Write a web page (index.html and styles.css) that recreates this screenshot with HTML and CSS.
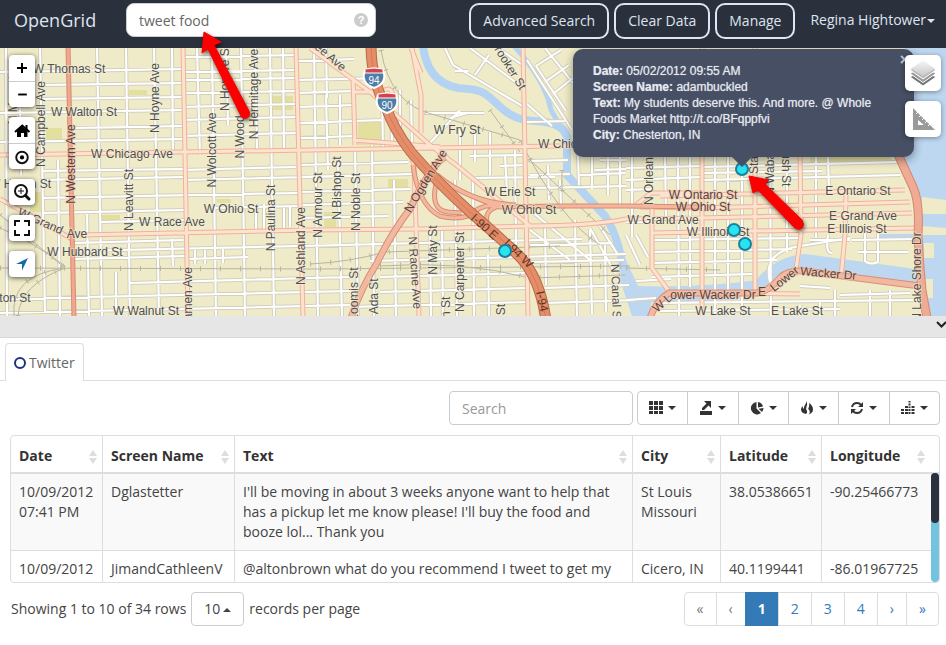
FILE: index.html
```html
<!DOCTYPE html>
<html lang="en">
<head>
<meta charset="utf-8">
<title>OpenGrid</title>
<link rel="stylesheet" href="styles.css">
</head>
<body>
<header class="topbar">
  <a class="brand" href="#">OpenGrid</a>
  <div class="query">
    <input class="query-input" type="text" value="tweet food" aria-label="Quick search">
    <button class="query-help" type="button" aria-label="Help">?</button>
  </div>
  <nav class="actions">
    <button class="outline" type="button">Advanced Search</button>
    <button class="outline" type="button">Clear Data</button>
    <button class="outline" type="button">Manage</button>
    <a class="user" href="#">Regina Hightower<span class="caret"></span></a>
  </nav>
</header>

<section class="map" aria-label="Map">
  <svg class="map-canvas" viewBox="0 48 946 268" preserveAspectRatio="xMinYMin slice">
    <defs>
      <path id="minor" d="M0 72l183-3M42 85l141-2M42 99l141-2M0 113l183-3M75 128l108-2M0 142l183-3M42 171l141-2M42 180l141-3M42 198l256-5M42 213l143-3M100 222l85-2M75 243l108-3M75 251l224-5M75 259l110-3M0 299l350-8M0 313l350-8M130 283l220-6
        M183 57l113-2M183 72l113-2M183 80l113-2M183 93l113-2M183 107l113-3M183 120l113-3M183 136l113-3M183 170l113-3M183 180l170-4M214 208l86-2M188 259l60-2M298 61l56-2M298 80l85-2M298 93l55-2M298 107l56-2M298 123l85-3M298 138l58-2M298 165l110-3M298 177l115-3M298 192l112-3M298 205l105-3M298 218l90-2M302 246l280-7M370 261l256-7M380 277l146-4M380 292l146-4M350 307l180-5M545 288l84-3M545 303l90-3
        M40 48l5 265M97 48l5 268M126 48l4 268M154 48l5 268M197 48l3 107M212 48l4 268M226 48l2 77M241 48l4 268M255 48l2 102M270 48l4 268M283 48l1 100M6 48l1 268M20 95l1 80M58 160l2 156M87 212l2 104M116 272l0 44M172 48l1 105M172 239l1 27M195 250l0 14M205 250l0 14M223 247l0 16M256 206l0 24M264 204l0 28M284 208l0 24M290 207l0 20
        M314 48l4 268M326 95l2 75M338 160l4 156M326 48l1 50M340 95l0 50M355 150l3 166M372 145l2 171M382 90l1 60M394 180l2 136M391 90l1 55M411 100l1 45M400 90l0 50M430 225l1 91M442 228l1 88M455 180l2 136M473 180l1 136M488 255l1 61M460 130l0 50M475 130l0 32M490 132l0 43M505 155l2 38M515 150l1 95M545 225l1 60M560 180l1 25M575 220l2 96M548 165l1 35M590 230l2 84M605 245l1 67M539 275l2 41
        M470 156l54-1M500 166l24-1M475 178l80-1M530 161l38-1M530 175l40-1M530 188l55-1M530 245l82-2M530 262l94-2
        M445 48l8 17M453 65l71 42M470 48l52 39M498 48l26 18M455 71l13 0M475 75l14-20
        M536 66l25-16M536 66l30 45M545 82l24-17M553 94l20-16M545 48l28 35M527 60l45 70M527 104l25 22M527 122l38-1
        M424 113l60 0M450 118l17-5M430 143l30-33
        M530 210l60 50M530 230l40 30M590 228l25 45M598 223l20 32M580 175l45-2M585 187l41-1M600 160l26 0M595 170l31-1M578 155l1 30M592 157l0 32M608 155l0 40M620 155l0 50
        M626 168l75-2M626 180l75-3M626 190l26-1M632 157l0 80M665 157l1 60M678 157l1 160M690 157l0 130M715 157l0 160M728 157l0 135M742 175l0 145M770 157l1 160M787 157l0 95M816 157l0 80M828 157l1 35M702 167l195-5M702 180l198-5M702 173l120-2M652 252l140-3M652 263l125-3M652 240l150-2M626 222l26 0M626 235l14 30M636 235l12 22M652 277l100-3M636 281l35-2M660 303l257-3M660 311l180-2M800 305l0 11M820 300l0 16M870 290l0 26M890 290l0 26M835 290l0 26M810 240l40 0M852 240l65-1M858 252l50 0M828 235q-3 18 4 18M865 232l0 30M878 230l0 32M866 262q6 3 12 0M770 282q-8-30 30-36l50-8M770 282l10 4M800 286l30 2M840 295l70-2M626 300l30-2"/>
      <path id="avenue" d="M0 155L310 150L626 145L650 144M80 235L310 230L420 229L530 226Q590 226 626 219L700 218L912 213M183 48l5 268M296 48l7 268M353 77l2 68M408 148L414 165L419 316M421 133V95L412 48M411 48l10 25M310 48L370 92L430 145L460 168L530 226M523 48l5 268M0 199L42 222L72 239M353 140L440 147M385 90Q395 85 393 108M353 92L375 92M702 48V316M755 48V292M800 150L801 235L795 276M846 195L845 235L841 278M652 205L652 268L668 290M702 193H651L636 205M660 196L905 190M700 208L910 202M652 233L915 228M702 293L800 294M640 207L702 208"/>
      <path id="ramp" d="M413 165Q418 205 440 216Q455 220 468 216M436 184Q430 210 448 212L462 213M440 180Q470 197 500 207L560 206L626 206L702 207M470 216Q480 203 500 206M488 226Q482 210 500 206M437 175Q470 203 516 205"/>
      <path id="ogden" d="M445 157Q430 166 410 209Q392 232 377 263Q360 290 351 318"/>
      <path id="wacker" d="M650 318Q655 302 669 293L756 293Q768 292 781 277Q788 270 805 271L850 277L920 286"/>
      <path id="shore" d="M896 150L913 187Q920 202 918 235L920 268L922 290L927 318"/>
      <path id="kennedy" d="M371 44Q371 80 386 107Q393 128 411 152Q435 180 469 211Q505 242 521 258Q540 279 546 320"/>
      <path id="rail" d="M0 268L320 269L630 266M0 228Q30 240 65 266M0 215Q25 235 65 268M65 268Q10 275 14 316M18 316Q20 285 65 268M310 264Q350 262 385 252L560 246M380 266Q460 260 530 278L625 275M381 50Q390 105 435 115L520 140Q560 220 600 245M530 160L610 235M562 170L562 192M626 268L720 270M490 110L520 152"/>
      <linearGradient id="sheet" x1="0" y1="0" x2="0" y2="1"><stop offset="0" stop-color="#f6f6f6"/><stop offset="1" stop-color="#c9c9c9"/></linearGradient>
    </defs>

    <rect class="land" x="0" y="48" width="2000" height="900"/>
    <g class="park">
      <path d="M271 96h22v14h-22zM46 128h16v11h-16zM129 90h18v5h-18zM102 215h18v5h-18zM358 121h23v24h-23zM388 179h20v11h-20zM324 212h12v15h-12zM217 199h14v4h-14zM30 192h12v20h-12zM810 157h80l4 6h-84z"/>
    </g>
    <g class="water">
      <path d="M905 48H2000V600H927L921 240H880V234H918L921 200L903 155Z"/>
      <path class="channel" d="M423 46Q428 88 468 89C498 90 495 119 535 121Q567 122 568 142"/>
      <path class="channel narrow" d="M514 46Q545 80 551 110Q560 125 567 140"/>
      <path class="channel" d="M567 137V175Q590 200 605 216Q618 235 623 268Q630 290 644 303"/>
      <path class="river" d="M634 294Q700 296 760 288Q778 264 805 262L922 278"/>
      <path d="M624 256L640 290L652 292L650 316H632L620 280Z"/>
    </g>
    <path class="land" d="M922 197L946 200V214H922zM922 226L946 228V235H922zM924 243H934V258H924zM925 279H933V298H927z"/>

    <use href="#minor" class="minor-case"/><use href="#minor" class="minor-fill"/>
    <use href="#rail" class="rail"/><use href="#rail" class="rail-ties"/>
    <use href="#avenue" class="avenue-case"/><use href="#avenue" class="avenue-fill"/>
    <path class="western-case" d="M68 46L74 318"/><path class="western" d="M68 46L74 318"/>
    <use href="#ramp" class="ramp-case"/><use href="#ramp" class="ramp-fill"/>
    <use href="#ogden" class="ogden-case"/><use href="#ogden" class="ogden-fill"/>
    <use href="#wacker" class="ogden-case"/><use href="#wacker" class="ogden-fill"/>
    <use href="#shore" class="shore-case"/><use href="#shore" class="shore-fill"/>
    <use href="#kennedy" class="kennedy-case"/><use href="#kennedy" class="kennedy-fill"/><use href="#kennedy" class="kennedy-mid"/>

    <g class="shield">
      <path d="M365 70Q374 67 383 70Q388 83 374 88Q360 83 365 70Z"/><path class="shield-top" d="M365 69Q374 67 383 69V73H365Z"/><text x="374" y="84">94</text>
      <path d="M378 95Q387 92 396 95Q401 108 387 113Q373 108 378 95Z"/><path class="shield-top" d="M378 94Q387 92 396 94V98H378Z"/><text x="387" y="109">90</text>
    </g>

    <g class="streets">
      <text x="69" y="73">W Thomas St</text><text x="84" y="116">W Walton St</text><text x="132" y="158">W Chicago Ave</text>
      <text x="231" y="213">W Ohio St</text><text x="172" y="226">W Race Ave</text><text x="85" y="256">W Hubbard St</text><text x="15" y="302">ton St</text><text x="146" y="315">W Walnut St</text>
      <text x="20" y="188">W Huron St</text><text transform="translate(17 215) rotate(24)" class="start">W Grand</text><text x="77" y="238">Ave</text>
      <text x="457" y="134">W Fry St</text><text x="538" y="148" class="start">W Chic</text><text x="510" y="196">W Erie St</text><text x="529" y="214">W Ohio St</text>
      <text class="major" x="703" y="199">W Ontario St</text><text class="major" x="703" y="211">W Ohio St</text><text x="663" y="224">W Grand Ave</text><text x="718" y="236">W Illinois St</text>
      <text x="858" y="195">E Ontario St</text><text x="863" y="220">E Grand Ave</text><text x="857" y="233">E Illinois St</text>
      <text x="723" y="315">W Lake St</text><text x="797" y="315">E Lake St</text>
      <text transform="translate(657 313) rotate(-42)" class="start major">W L</text><text class="major" x="713" y="299">ower Wacker Dr</text><text class="major" x="762" y="296">E</text>
      <text transform="translate(774 292) rotate(-38)" class="start major">Lower</text><text transform="translate(800 275) rotate(5)" class="start major">Wacker Dr</text>
      <text transform="translate(17 100) rotate(-90)">N Mozart</text>
      <text transform="translate(45 124) rotate(-90)">N Campbell Ave</text><text class="major" transform="translate(75 164) rotate(-90)">N Western Ave</text>
      <text transform="translate(159 98) rotate(-90)">N Hoyne Ave</text><text transform="translate(216 150) rotate(-90)">N Wolcott Ave</text>
      <text transform="translate(244 137) rotate(-90)">N Wood</text><text transform="translate(229 78) rotate(-90)">N Honore St</text><text transform="translate(258 94) rotate(-90)">N Hermitage Ave</text>
      <text transform="translate(133 200) rotate(-90)">N Leavitt St</text><text transform="translate(192 298) rotate(-90)">Damen Ave</text>
      <text transform="translate(275 218) rotate(-90)">N Paulina St</text><text transform="translate(305 246) rotate(-90)">N Ashland Ave</text>
      <text transform="translate(322 205) rotate(-90)">N Armour St</text><text transform="translate(341 188) rotate(-90)">N Bishop St</text><text transform="translate(360 202) rotate(-90)">N Noble St</text>
      <text transform="translate(358 294) rotate(-90)">Loomis St</text><text transform="translate(378 302) rotate(-90)">N Ada St</text>
      <text transform="translate(437 250) rotate(-90)">N May St</text><text transform="translate(464 272) rotate(-90)">N Carpenter St</text>
      <text transform="translate(411 273) rotate(86)">N Racine Ave</text><text transform="translate(450 314) rotate(-90)">gan St</text><text transform="translate(505 318) rotate(-90)">en St</text>
      <text transform="translate(612 293) rotate(88)">N Canal St</text><text transform="translate(653 178) rotate(-90)">N Orleans</text>
      <text transform="translate(758 160) rotate(-90)">State</text><text transform="translate(774 168) rotate(-90)">N Wabash</text><text transform="translate(782 165) rotate(90)">Rush St</text>
      <text transform="translate(921 277) rotate(-90)">N Lake Shore Dr</text>
      <text class="major" transform="translate(429 183) rotate(-59)">N Ogden Ave</text><text transform="translate(328 60) rotate(40)">ee Ave</text><text transform="translate(507 70) rotate(58)">rooker St</text>
      <text transform="translate(470 219) rotate(42)" class="start road">I-90 E</text><text transform="translate(503 244) rotate(44)" class="start road">I-94 W</text><text transform="translate(536 292) rotate(78)" class="start road">I-94</text>
    </g>
    <g class="marker"><circle cx="742" cy="169" r="6"/><circle cx="734" cy="230" r="6"/><circle cx="745" cy="244" r="6"/><circle cx="505" cy="251" r="6"/></g>
  </svg>

  <div class="tools tools-left">
    <div class="tool-group">
      <button type="button" aria-label="Zoom in"><svg viewBox="0 0 26 26"><path class="thick" d="M8 13h10M13 8v10"/></svg></button>
      <button type="button" aria-label="Zoom out"><svg viewBox="0 0 26 26"><path class="thick" d="M9 13h9"/></svg></button>
    </div>
    <div class="tool-group">
      <button type="button" aria-label="Home"><svg viewBox="0 0 26 26"><path d="M13 9.500L18.500 14V20H15V16H12V20H8V14Z"/><path class="roof" d="M6 15L13.300 8.500L20.500 15"/><path d="M16.500 8h2v4h-2z"/></svg></button>
      <button type="button" aria-label="Center"><svg viewBox="0 0 26 26"><circle class="line" cx="13" cy="14" r="6"/><circle cx="13" cy="14" r="2.200"/></svg></button>
    </div>
    <div class="tool-group"><button type="button" aria-label="Zoom to area"><svg viewBox="0 0 26 26"><circle class="line" cx="12" cy="12" r="6"/><path class="fine" d="M9 12h6M12 9v6"/><path class="handle" d="M16.500 16.500L20 20"/></svg></button></div>
    <div class="tool-group"><button type="button" aria-label="Full screen"><svg viewBox="0 0 26 26"><path class="line" d="M6 11V6H11M15 6H20V11M20 15V20H15M11 20H6V15"/></svg></button></div>
    <div class="tool-group"><button type="button" aria-label="Locate me"><svg viewBox="0 0 26 26"><path class="locate" d="M19 7L7 13H13V19.500Z"/></svg></button></div>
  </div>

  <article class="popup">
    <button class="popup-close" type="button" aria-label="Close">×</button>
    <p><b>Date:</b> 05/02/2012 09:55 AM</p>
    <p><b>Screen Name:</b> adambuckled</p>
    <p><b>Text:</b> My students deserve this. And more. @ Whole Foods Market http://t.co/BFqppfvi</p>
    <p><b>City:</b> Chesterton, IN</p>
  </article>

  <div class="tools tools-right">
    <button type="button" aria-label="Layers"><svg viewBox="0 0 36 36"><g stroke="#fff" stroke-width="1"><path fill="#777" d="M5 22L18 31L31 22L18 15Z"/><path fill="#999" d="M5 18.500L18 27.500L31 18.500L18 11Z"/><path fill="#bbb" d="M5 15L18 24L31 15L18 6Z"/></g><path fill="url(#sheet)" d="M6 13.500L18 21L30 13.500L18 5.500Z"/></svg></button>
    <button type="button" aria-label="Measure"><svg viewBox="0 0 36 36"><path fill="#9a9a9a" fill-rule="evenodd" d="M8 7L30 29H8ZM13 19V24H19Z"/><path stroke="#fff" stroke-width="1" d="M11 13l2-2M14 16l2-2M17 19l2-2M20 22l2-2M23 25l2-2"/></svg></button>
  </div>
</section>

<div class="splitter">
  <button type="button" aria-label="Collapse results"><svg viewBox="0 0 12 10"><path d="M3 2L7.500 6.500L12 2"/></svg></button>
</div>

<main class="results">
  <nav class="tabs"><a class="tab" href="#"><span class="ring"></span>Twitter</a></nav>
  <div class="toolbar">
    <input class="search" type="text" placeholder="Search" aria-label="Search">
    <div class="button-group">
      <button type="button" aria-label="Columns"><svg viewBox="0 0 14 14"><path d="M0 0h4v4H0zM5 0h4v4H5zM10 0h4v4h-4zM0 5h4v4H0zM5 5h4v4H5zM10 5h4v4h-4zM0 10h4v3H0zM5 10h4v3H5zM10 10h4v3h-4z"/></svg><span class="caret"></span></button>
      <button type="button" aria-label="Export"><svg viewBox="0 0 14 14"><path d="M1 10h12v4H1zM5 0h7v7L9.500 4.500L5 9H3V7L7.500 2.500z"/></svg><span class="caret"></span></button>
      <button type="button" aria-label="Chart"><svg viewBox="0 0 14 14"><path d="M6.500 1V7.500L11 12A6.200 6.200 0 1 1 6.500 1ZM8 1A6 6 0 0 1 13 5.500L8 6.500ZM8.500 7.800L13.500 7A6 6 0 0 1 12 11Z"/></svg><span class="caret"></span></button>
      <button type="button" aria-label="Heat map"><svg viewBox="0 0 14 14"><path d="M6 0Q8 3 6.500 5.500Q5.500 8 7 10Q7.500 12 6 13Q1 12 1 8.500Q1 6.500 2.500 5Q2.500 7 4 8Q3.500 6 5 4Q6.500 2 6 0ZM9 2Q13 4.500 13 8.500Q13 12 8.500 13.500Q10.500 11.500 9.500 9.500Q7.500 7.500 9 5.500Q9.500 4 9 2Z"/></svg><span class="caret"></span></button>
      <button type="button" aria-label="Refresh"><svg viewBox="0 0 14 14"><path fill="none" stroke="#333" stroke-width="2" d="M2 6Q3 2 7 2Q10 2 11.500 4.500M12 8Q11 12 7 12Q4 12 2.500 9.500"/><path d="M13 1V6H8zM1 13V8H6z"/></svg><span class="caret"></span></button>
      <button type="button" aria-label="Statistics"><svg viewBox="0 0 14 14"><path d="M0 8h3v2H0zM0 11h3v2H0zM4 5h3v2H4zM4 8h3v2H4zM4 11h3v2H4zM7.500 0h2v1.500h-2zM7.500 2.500h2v2h-2zM7.500 5.500h2v1.500h-2zM7.500 8h2v2h-2zM7.500 11h2v2h-2zM10.500 5h3v2h-3zM10.500 8h3v2h-3zM10.500 11h3v2h-3z"/></svg><span class="caret"></span></button>
    </div>
  </div>

  <div class="grid">
    <table>
      <colgroup><col class="c-date"><col class="c-name"><col><col class="c-city"><col class="c-lat"><col class="c-lon"></colgroup>
      <thead><tr><th>Date</th><th>Screen Name</th><th>Text</th><th>City</th><th>Latitude</th><th>Longitude</th></tr></thead>
      <tbody>
        <tr><td>10/09/2012 07:41 PM</td><td>Dglastetter</td><td>I'll be moving in about 3 weeks anyone want to help that has a pickup let me know please! I'll buy the food and booze lol... Thank you</td><td>St Louis Missouri</td><td>38.05386651</td><td>-90.25466773</td></tr>
        <tr><td>10/09/2012</td><td>JimandCathleenV</td><td>@altonbrown what do you recommend I tweet to get my</td><td>Cicero, IN</td><td>40.1199441</td><td>-86.01967725</td></tr>
      </tbody>
    </table>
    <div class="scroll"><div class="thumb"></div></div>
  </div>

  <footer class="pager">
    <label class="size">Showing 1 to 10 of 34 rows <span class="select"><select><option>10</option></select><span class="caret up"></span></span> records per page</label>
    <nav class="pages" aria-label="Pages">
      <a class="off" href="#">«</a><a class="off" href="#">‹</a><a class="current" href="#">1</a><a href="#">2</a><a href="#">3</a><a href="#">4</a><a href="#">›</a><a href="#">»</a>
    </nav>
  </footer>
</main>

<svg class="callouts" viewBox="0 0 946 645" aria-hidden="true">
  <path d="M204 32L221 42L214 45L249 111Q251 116 247 118Q243 120 241 116L208 49L202 53Z"/>
  <path d="M749 176L769 180L765 184L802 220Q805 225 802 228Q798 231 794 227L758 190L753 193Z"/>
</svg>
</body>
</html>
```
FILE: styles.css
```css
* { box-sizing: border-box; }

body {
  margin: 0;
  min-height: 100vh;
  display: flex;
  flex-direction: column;
  position: relative;
  background: #fff;
  color: #444;
  font: 14px/20px "Open Sans", "Noto Sans", sans-serif;
}

button, input, select { font: inherit; color: inherit; margin: 0; }
button { padding: 0; border: 0; background: none; cursor: pointer; }
a { text-decoration: none; }

.caret {
  display: inline-block;
  border: 4px solid transparent;
  border-top-color: currentColor;
  border-bottom: 0;
  vertical-align: middle;
  margin-left: 2px;
}
.caret.up { border-top: 0; border-bottom: 4px solid currentColor; }

/* Header */
.topbar {
  display: flex;
  align-items: flex-start;
  height: 48px;
  padding: 3px 11px 0 14px;
  background: #2b313c;
  color: #dde4ef;
}
.brand { width: 112px; color: inherit; font-size: 18px; line-height: 34px; }
.query { position: relative; width: 250px; }
.query-input {
  width: 100%;
  height: 34px;
  padding: 6px 12px;
  border: 1px solid #ccc;
  border-radius: 8px;
  background: #fff;
  color: #666;
}
.query-help {
  position: absolute;
  right: 8px;
  top: 10px;
  width: 14px;
  height: 14px;
  border-radius: 50%;
  background: #ccc;
  color: #fff;
  font: bold 11px/14px "Liberation Sans", sans-serif;
}
.actions { display: flex; gap: 5px; margin-left: auto; }
.outline {
  height: 36px;
  padding: 0 12px;
  border: 2px solid #dde6f5;
  border-radius: 10px;
}
.user { margin-left: 10px; color: inherit; line-height: 34px; white-space: nowrap; }
.user .caret { margin-left: 1px; }

/* Map */
.map { position: relative; flex: 1 0 240px; overflow: hidden; }
.map-canvas { position: absolute; inset: 0; width: 100%; height: 100%; }
.map-canvas path, .map-canvas use { fill: none; }
.map-canvas .land { fill: #efebc8; }
.park path { fill: #e2df9f; }
.water path { fill: #bdd7f1; }
.water .channel { fill: none; stroke: #b4d3f2; stroke-width: 8; }
.water .narrow { stroke-width: 5; }
.water .river { fill: none; stroke: #bdd7f1; stroke-width: 16; }
.minor-case { stroke: #d3d0c0; stroke-width: 4; }
.minor-fill { stroke: #fff; stroke-width: 2; }
.rail { stroke: #b8b5a2; stroke-width: 1; }
.rail-ties { stroke: #b8b5a2; stroke-width: 5; stroke-dasharray: 1 19; }
.avenue-case { stroke: #eeb29a; stroke-width: 5; }
.avenue-fill { stroke: #fde3cf; stroke-width: 3; }
.western-case { stroke: #d98a72; stroke-width: 5; }
.western { stroke: #f0a890; stroke-width: 3; }
.ramp-case { stroke: #d88b70; stroke-width: 5; }
.ramp-fill { stroke: #f4b79e; stroke-width: 3; }
.ogden-case { stroke: #d68f76; stroke-width: 7; }
.ogden-fill { stroke: #f3b8a0; stroke-width: 5; }
.shore-case { stroke: #d68871; stroke-width: 9; }
.shore-fill { stroke: #efab94; stroke-width: 7; }
.kennedy-case { stroke: #b56a4b; stroke-width: 11; }
.kennedy-fill { stroke: #e58d68; stroke-width: 9; }
.kennedy-mid { stroke: #d47a56; stroke-width: 1; }
.shield path { fill: #4e7da6; stroke: #fff; stroke-width: 2; }
.shield .shield-top { fill: #d2434d; stroke-width: 1; }
.shield text { fill: #fff; font: 10px "Liberation Sans", sans-serif; text-anchor: middle; }
.streets text {
  fill: #505050;
  stroke: #f3f0d8;
  stroke-width: 2px;
  stroke-opacity: 0.5;
  paint-order: stroke;
  text-anchor: middle;
  font: 12px "Liberation Sans", Arial, sans-serif;
}
.streets .start { text-anchor: start; }
.streets .major { fill: #54443e; stroke: #f3c9b4; }
.streets .road { fill: #5e3626; stroke: none; }
.marker circle { fill: #27e4f2; stroke: #1c7f9d; stroke-width: 2; }

.tools { position: absolute; top: 7px; display: flex; flex-direction: column; gap: 10px; }
.tools-left { left: 9px; }
.tools-right { right: 5px; }
.tool-group { border-radius: 4px; background: #fff; box-shadow: 0 1px 5px rgba(0, 0, 0, 0.65); }
.tool-group button { display: block; width: 26px; height: 26px; }
.tool-group button + button { border-top: 1px solid #ccc; }
.tools svg { display: block; width: 100%; height: 100%; }
.tools .thick { stroke: #000; stroke-width: 2; }
.tools .line { fill: none; stroke: #111; stroke-width: 2; }
.tools .fine { stroke: #111; }
.tools .roof { fill: none; stroke: #000; stroke-width: 2; }
.tools .handle { stroke: #111; stroke-width: 3; stroke-linecap: round; }
.tools .locate { fill: #136aa8; }
.tools-right button {
  width: 36px;
  height: 36px;
  border-radius: 5px;
  background: #fff;
  box-shadow: 0 1px 5px rgba(0, 0, 0, 0.4);
}

.popup {
  position: absolute;
  left: 573px;
  top: 1px;
  width: 341px;
  padding: 14px 32px 14px 20px;
  border-radius: 10px;
  background: #464f63;
  color: #e6e9f0;
  box-shadow: 0 3px 10px rgba(0, 0, 0, 0.4);
  font: 12px/16px "Liberation Sans", Arial, sans-serif;
  text-shadow: 0 0 1px rgba(230, 233, 240, 0.7);
}
.popup::after {
  content: "";
  position: absolute;
  left: 159px;
  top: 100%;
  border: 10px solid transparent;
  border-top-color: #464f63;
  border-bottom: 0;
}
.popup p { margin: 0; }
.popup-close { position: absolute; right: 5px; top: 3px; color: #c3c9d3; font: bold 16px/16px "Liberation Sans", sans-serif; }

/* Results */
.splitter { display: flex; justify-content: flex-end; height: 22px; border-bottom: 1px solid #d8d8d8; background: #e6e6e6; }
.splitter button { align-self: flex-start; padding-top: 4px; }
.splitter svg { display: block; width: 12px; height: 10px; fill: none; stroke: #222; stroke-width: 2; }
.tabs { display: flex; padding: 5px 5px 0; border-bottom: 1px solid #ddd; }
.tab {
  display: flex;
  align-items: center;
  gap: 3px;
  height: 38px;
  margin-bottom: -1px;
  padding: 0 8px;
  border: 1px solid #ddd;
  border-bottom: 0;
  border-radius: 4px 4px 0 0;
  background: #fff;
  color: #666;
}
.ring { width: 12px; height: 12px; border: 2px solid #1e3284; border-radius: 50%; }

.toolbar { display: flex; justify-content: flex-end; gap: 4px; padding: 10px 6px; }
.search { width: 184px; height: 34px; padding: 6px 12px; border: 1px solid #ccc; border-radius: 4px; }
.search::placeholder { color: #999; opacity: 1; }
.button-group { display: flex; width: 303px; border: 1px solid #ccc; border-radius: 4px; }
.button-group button { display: flex; flex: 1; align-items: center; justify-content: center; gap: 3px; height: 32px; color: #333; }
.button-group button + button { border-left: 1px solid #ccc; }
.button-group svg { width: 14px; height: 14px; fill: #333; }

.grid {
  position: relative;
  max-height: 148px;
  margin: 0 6px 0 10px;
  border: 1px solid #ddd;
  border-radius: 4px;
  overflow: hidden;
}
table { width: 100%; border-collapse: separate; border-spacing: 0; table-layout: fixed; }
.c-date { width: 91px; }
.c-name { width: 132px; }
.c-city { width: 88px; }
.c-lat { width: 101px; }
.c-lon { width: 118px; }
th, td { padding: 8px; text-align: left; vertical-align: top; }
th { position: relative; padding: 10px 8px 6px; border-bottom: 2px solid #ddd; color: #333; }
th + th, td + td { border-left: 1px solid #ddd; }
td { border-bottom: 1px solid #ddd; }
tbody tr:first-child { background: #f9f9f9; }
th::before, th::after { content: ""; position: absolute; right: 5px; border: 4px solid transparent; }
th::before { top: 14px; border-top: 0; border-bottom: 6px solid #ddd; }
th::after { top: 22px; border-bottom: 0; border-top: 6px solid #ddd; }
th:last-child::before, th:last-child::after { right: 14px; }
.scroll { position: absolute; right: 0; top: 37px; bottom: 0; width: 8px; border-radius: 4px; background: #72c3e0; }
.thumb { height: 50px; border-radius: 4px; background: #2b313c; }

.pager { display: flex; justify-content: space-between; align-items: flex-start; padding: 9px 7px 19px 11px; }
.size { display: flex; align-items: center; gap: 5px; height: 34px; }
.select { position: relative; }
.select select {
  appearance: none;
  width: 53px;
  height: 34px;
  padding: 0 12px;
  border: 1px solid #ccc;
  border-radius: 4px;
  background: #fff;
}
.select .caret { position: absolute; right: 13px; top: 16px; }
.pages { display: flex; }
.pages a { padding: 6px 12px; border: 1px solid #ddd; margin-left: -1px; color: #337ab7; }
.pages a:first-child { border-radius: 4px 0 0 4px; }
.pages a:last-child { border-radius: 0 4px 4px 0; }
.pages .off { color: #777; }
.pages .current { border-color: #337ab7; background: #337ab7; color: #fff; font-weight: bold; }

.callouts {
  position: absolute;
  left: 0;
  top: 0;
  width: 946px;
  height: 645px;
  pointer-events: none;
  fill: #fb0000;
  stroke: #fb0000;
  filter: drop-shadow(1px 2px 2px rgba(0, 0, 0, 0.6));
}
```
